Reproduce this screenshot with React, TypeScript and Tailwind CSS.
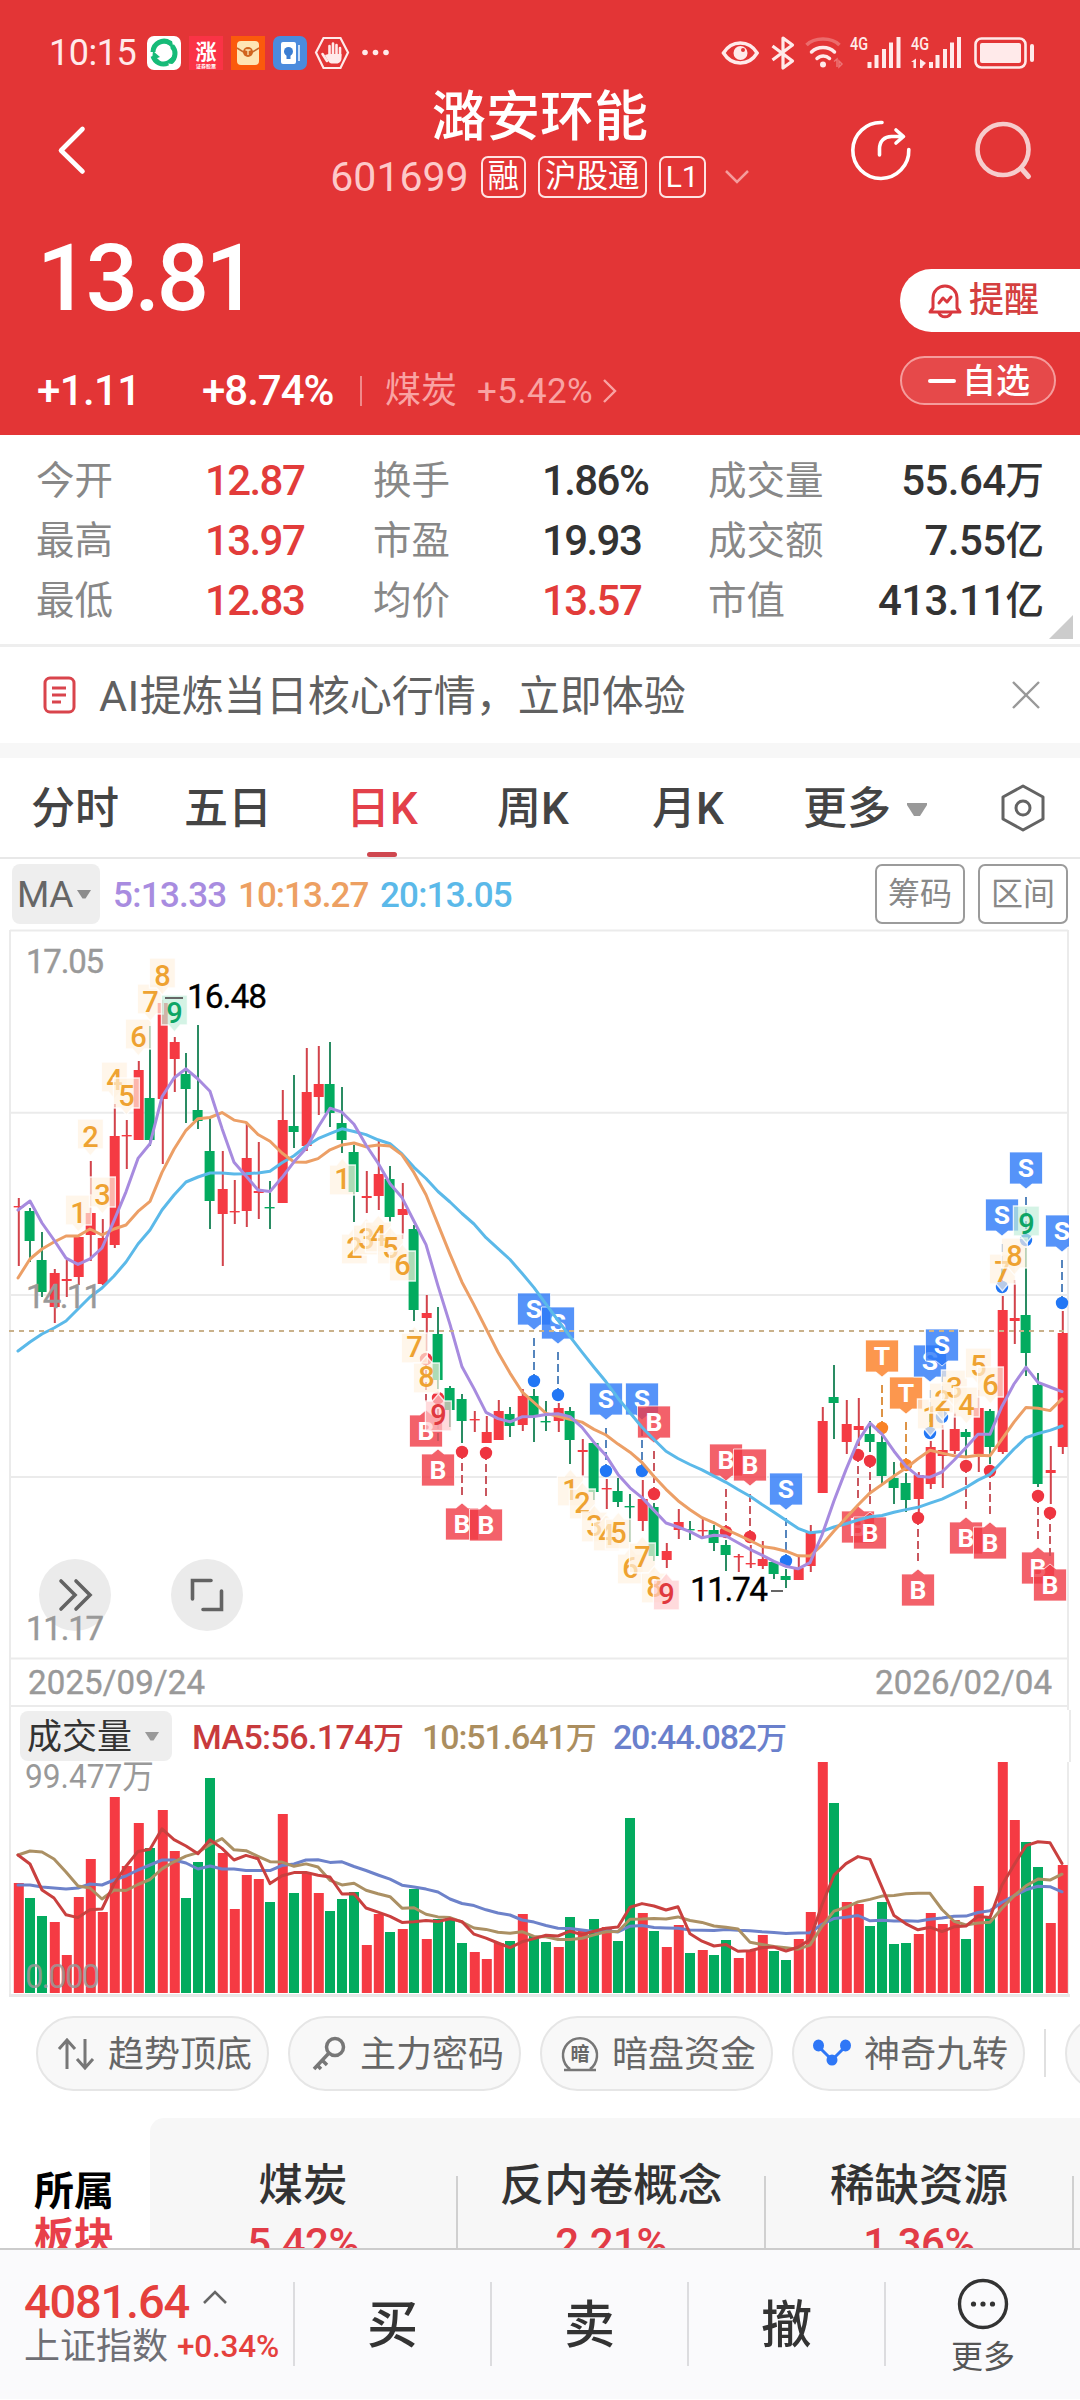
import type { ReactNode } from "react";

type Candle = [high: number, low: number, top: number, bottom: number, up: 0 | 1];

/* ---- daily candles, y positions on the 1058px wide chart canvas ---- */
const CANDLES: Candle[] = [
  [1198, 1266, 1206, 1207, 1], [1208, 1262, 1211, 1241, 0], [1232, 1297, 1260, 1292, 0], [1269, 1323, 1273, 1307, 1],
  [1260, 1297, 1279, 1281, 1], [1237, 1285, 1237, 1277, 1], [1161, 1261, 1213, 1235, 1], [1219, 1285, 1238, 1284, 1],
  [1104, 1248, 1136, 1245, 1], [1120, 1169, 1135, 1136, 1], [1061, 1140, 1070, 1140, 1], [1026, 1146, 1098, 1140, 0],
  [1000, 1164, 1003, 1099, 1], [1037, 1092, 1042, 1059, 1], [1053, 1123, 1074, 1089, 0], [1025, 1129, 1110, 1121, 0],
  [1119, 1229, 1151, 1201, 0], [1151, 1266, 1189, 1214, 1], [1180, 1224, 1211, 1212, 1], [1122, 1227, 1158, 1211, 1],
  [1142, 1219, 1191, 1193, 1], [1181, 1229, 1207, 1208, 0], [1090, 1203, 1120, 1203, 1], [1075, 1148, 1126, 1132, 0],
  [1048, 1151, 1092, 1146, 1], [1046, 1115, 1084, 1097, 1], [1042, 1127, 1084, 1113, 0], [1087, 1153, 1123, 1140, 0],
  [1145, 1222, 1152, 1192, 0], [1171, 1213, 1196, 1198, 1], [1141, 1210, 1174, 1196, 1], [1166, 1222, 1179, 1217, 0],
  [1183, 1239, 1209, 1215, 1], [1225, 1321, 1229, 1310, 0], [1295, 1351, 1313, 1318, 1], [1307, 1389, 1334, 1380, 0],
  [1386, 1427, 1388, 1410, 0], [1394, 1443, 1399, 1421, 0], [1411, 1432, 1419, 1420, 1], [1416, 1443, 1432, 1443, 1],
  [1400, 1440, 1411, 1440, 1], [1407, 1437, 1414, 1426, 0], [1389, 1431, 1396, 1425, 1], [1389, 1442, 1396, 1417, 0],
  [1401, 1431, 1421, 1422, 0], [1403, 1432, 1408, 1421, 1], [1407, 1464, 1411, 1440, 0], [1439, 1477, 1450, 1452, 1],
  [1443, 1500, 1443, 1492, 0], [1479, 1509, 1488, 1489, 1], [1478, 1507, 1491, 1502, 0], [1494, 1542, 1506, 1507, 0],
  [1480, 1531, 1499, 1521, 1], [1503, 1561, 1507, 1556, 0], [1543, 1568, 1551, 1560, 1], [1509, 1539, 1522, 1530, 1],
  [1521, 1540, 1529, 1530, 0], [1519, 1537, 1530, 1531, 1], [1525, 1551, 1530, 1543, 0], [1540, 1571, 1545, 1555, 0],
  [1554, 1572, 1556, 1557, 1], [1545, 1568, 1563, 1564, 1], [1541, 1569, 1559, 1566, 1], [1562, 1579, 1562, 1574, 0],
  [1569, 1588, 1576, 1580, 0], [1557, 1580, 1568, 1580, 1], [1525, 1572, 1532, 1566, 1], [1407, 1493, 1421, 1493, 1],
  [1365, 1439, 1397, 1403, 0], [1400, 1454, 1424, 1442, 1], [1398, 1446, 1426, 1430, 1], [1421, 1452, 1434, 1442, 0],
  [1436, 1484, 1442, 1476, 0], [1462, 1504, 1478, 1488, 0], [1473, 1512, 1483, 1500, 0], [1472, 1514, 1475, 1499, 1],
  [1441, 1489, 1447, 1484, 1], [1425, 1488, 1450, 1456, 1], [1412, 1454, 1429, 1451, 1], [1429, 1457, 1432, 1437, 0],
  [1390, 1472, 1408, 1454, 1], [1409, 1464, 1411, 1447, 0], [1296, 1454, 1310, 1452, 1], [1280, 1344, 1318, 1321, 1],
  [1248, 1376, 1315, 1353, 0], [1373, 1487, 1385, 1484, 0], [1446, 1504, 1470, 1473, 1], [1311, 1454, 1333, 1447, 1],
];

const VOLUMES = [
  110, 95, 77, 71, 38, 96, 134, 81, 196, 127, 170, 145, 183, 142, 95, 131, 215, 140, 84, 118, 114, 91, 179, 100, 119,
  100, 82, 94, 101, 48, 79, 61, 64, 104, 54, 74, 75, 50, 41, 34, 50, 52, 79, 57, 51, 46, 76, 62, 74, 66, 52, 175, 80,
  62, 46, 68, 40, 43, 38, 53, 35, 42, 58, 42, 33, 54, 81, 231, 190, 91, 89, 67, 91, 49, 50, 59, 80, 69, 73, 54, 107,
  75, 231, 173, 151, 126, 70, 128,
];

/* averages that depend on days before the visible range */
const MA5_HEAD = [1210, 1201, 1223, 1240];
const MA10_HEAD = [1278, 1259, 1249, 1242, 1236, 1236, 1229, 1235, 1229];
const MA20_HEAD = [
  1351, 1342, 1334, 1328, 1321, 1309, 1297, 1288, 1276, 1262, 1244, 1230, 1210, 1195, 1182, 1177, 1173, 1173, 1174,
];
const VMA5_HEAD = [138, 129, 103, 95];
const VMA10_HEAD = [138, 142, 141, 134, 121, 107, 105, 94, 103];
const VMA20_HEAD = [108, 108, 106, 105, 104, 105, 109, 108, 113, 117, 123, 128, 133, 133, 130, 124, 127, 124, 124];

type Flag = { i: number; y: number; kind: "S" | "B" | "T"; above: boolean };
const FLAGS: Flag[] = [
  { i: 34, y: 1359, kind: "B", above: false },
  { i: 35, y: 1398, kind: "B", above: false },
  { i: 37, y: 1452, kind: "B", above: false },
  { i: 39, y: 1453, kind: "B", above: false },
  { i: 43, y: 1381, kind: "S", above: true },
  { i: 45, y: 1395, kind: "S", above: true },
  { i: 49, y: 1471, kind: "S", above: true },
  { i: 52, y: 1471, kind: "S", above: true },
  { i: 53, y: 1494, kind: "B", above: true },
  { i: 59, y: 1532, kind: "B", above: true },
  { i: 61, y: 1537, kind: "B", above: true },
  { i: 64, y: 1561, kind: "S", above: true },
  { i: 70, y: 1455, kind: "B", above: false },
  { i: 71, y: 1461, kind: "B", above: false },
  { i: 72, y: 1428, kind: "T", above: true },
  { i: 74, y: 1465, kind: "T", above: true },
  { i: 75, y: 1518, kind: "B", above: false },
  { i: 76, y: 1433, kind: "S", above: true },
  { i: 77, y: 1417, kind: "S", above: true },
  { i: 79, y: 1466, kind: "B", above: false },
  { i: 81, y: 1471, kind: "B", above: false },
  { i: 82, y: 1287, kind: "S", above: true },
  { i: 84, y: 1240, kind: "S", above: true },
  { i: 85, y: 1496, kind: "B", above: false },
  { i: 86, y: 1513, kind: "B", above: false },
  { i: 87, y: 1303, kind: "S", above: true },
];
const FLAG_COLORS = {
  S: { box: "#2a78f7", dot: "#2277f5", line: "#5585bd" },
  B: { box: "#f03a45", dot: "#ee3540", line: "#c9575f" },
  T: { box: "#fb7d22", dot: "#f98225", line: "#dd9447" },
};

/* nine-turn counts: first candle of each run, and the side they sit on */
const RUNS = [
  { start: 5, above: true },
  { start: 27, above: false },
  { start: 46, above: false },
  { start: 76, above: true },
];

const UP = "#f53a43";
const DOWN = "#03ab5f";

const px = (i: number) => 18 + i * 12;

function average(values: number[], n: number, head: number[]) {
  return values.map((_, i) =>
    i < n - 1 ? head[i] : values.slice(i - n + 1, i + 1).reduce((a, b) => a + b, 0) / n
  );
}

function Line({ ys, color }: { ys: number[]; color: string }) {
  return (
    <polyline
      points={ys.map((y, i) => `${px(i)},${y.toFixed(1)}`).join(" ")}
      fill="none"
      stroke={color}
      strokeWidth="3"
      strokeLinejoin="round"
      strokeLinecap="round"
    />
  );
}

function FlagMark({ i, y, kind, above }: Flag) {
  const c = FLAG_COLORS[kind];
  const x = px(i);
  const d = above ? 1 : -1;
  // box edge next to the dot, and the far edge
  const near = y - d * 56;
  const far = y - d * 88;
  return (
    <g>
      <line x1={x} x2={x} y1={y - d * 43} y2={y - d * 6} stroke={c.line} strokeWidth="2" strokeDasharray="8 4" />
      <circle cx={x} cy={y} r="6.2" fill={c.dot} />
      <path
        d={`M${x - 16.5} ${far}H${x + 16.5}V${near}H${x + 6}L${x} ${near + d * 5}L${x - 6} ${near}H${x - 16.5}Z`}
        fill={c.box}
        fillOpacity="0.8"
        stroke="#fff"
        strokeOpacity="0.75"
        strokeWidth="1"
      />
      <text
        x={x}
        y={(near + far) / 2 + 9}
        textAnchor="middle"
        className="text-[26.500px] font-bold"
        fill="#fff"
      >
        {kind}
      </text>
    </g>
  );
}

function CountMark({ i, n, above }: { i: number; n: number; above: boolean }) {
  const x = px(i) + 0.4;
  const d = above ? -1 : 1;
  const edge = above ? CANDLES[i][0] : CANDLES[i][1];
  const near = edge + d * 12;
  const far = edge + d * 42;
  const last = n === 9;
  const fill = !last ? "#fff1e0" : above ? "#bfeed8" : "#ffc9cc";
  const ink = !last ? "#eea231" : above ? "#0da565" : "#e0383f";
  return (
    <g>
      <path
        d={`M${x - 13} ${far}H${x + 13}V${near}H${x + 6}L${x} ${near - d * 7}L${x - 6} ${near}H${x - 13}Z`}
        fill={fill}
        fillOpacity="0.68"
        stroke="#fff"
        strokeOpacity="0.8"
        strokeWidth="1.3"
      />
      <text x={x} y={edge + d * 25 + 10.5} textAnchor="middle" className="text-[29px] font-medium" fill={ink}>
        {n}
      </text>
    </g>
  );
}

function PriceChart() {
  const closes = CANDLES.map((c) => (c[4] ? c[2] : c[3]));
  return (
    <svg viewBox="0 928 1080 782" className="block h-[782px] w-[1080px]">
      <g stroke="#ebebeb" strokeWidth="2">
        <path d="M10 930.5H1068M10 1112.7H1068M10 1295H1068M10 1477H1068M10 1658.5H1068M10 1706H1068" />
        <path d="M10 930V1710M1068 930V1710" />
      </g>
      <g fill="#ebebeb">
        <circle cx="75" cy="1595" r="36" />
        <circle cx="207" cy="1595" r="36" />
      </g>
      <g fill="none" stroke="#636363" strokeWidth="3.6" strokeLinecap="round">
        <path d="M61 1581l14 14-14 14M76 1581l14 14-14 14" />
        <path d="M192.500 1599v-18.500h18.500M221.500 1591v18.500h-18.500" />
      </g>

      {CANDLES.map(([high, low, top, bottom, up], i) => {
        const cx = px(i) + (up ? 0.8 : 0);
        return (
          <g key={i}>
            <rect x={cx - 1} y={high} width="2" height={low - high} fill={up ? "#d2434b" : "#2a8c63"} />
            <rect
              x={cx - (up ? 5.1 : 5.4)}
              y={top}
              width="10"
              height={Math.max(1.4, bottom - top)}
              fill={up ? UP : DOWN}
            />
          </g>
        );
      })}

      {FLAGS.map((f) => (
        <FlagMark key={f.i} {...f} />
      ))}
      {RUNS.map((run) =>
        [1, 2, 3, 4, 5, 6, 7, 8, 9].map((n) => (
          <CountMark key={`${run.start}-${n}`} i={run.start + n - 1} n={n} above={run.above} />
        ))
      )}

      <Line ys={average(closes, 20, MA20_HEAD)} color="#5bb9e9" />
      <Line ys={average(closes, 10, MA10_HEAD)} color="#ec9f66" />
      <Line ys={average(closes, 5, MA5_HEAD)} color="#a78bdf" />
      <path d="M9 1331H1068" stroke="#c9b18b" strokeWidth="2" strokeDasharray="5 5" />
      <rect x="1069" y="1150" width="11" height="200" fill="#fff" />

      <path d="M165 998h18M771 1591h12" stroke="#666" strokeWidth="2" />
      <g className="text-[33px]" fill="#999" stroke="#999" strokeWidth="0.4">
        <text x="26" y="973" textLength="78">17.05</text>
        <text x="26" y="1308" textLength="76">14.11</text>
        <text x="26" y="1640" textLength="78">11.17</text>
        <text x="28" y="1694" textLength="177">2025/09/24</text>
        <text x="875" y="1694" textLength="177">2026/02/04</text>
      </g>
      <g className="text-[33.500px]" fill="#000" stroke="#000" strokeWidth="0.3">
        <text x="187" y="1008" textLength="80">16.48</text>
        <text x="690" y="1601" textLength="78">11.74</text>
      </g>
    </svg>
  );
}

function VolumeChart() {
  const line = (n: number, head: number[]) => average(VOLUMES, n, head).map((v) => 1993 - v);
  return (
    <svg viewBox="0 1762 1080 236" className="block h-[236px] w-[1080px]">
      <path d="M10 1762V1996M1068 1762V1996" stroke="#ebebeb" strokeWidth="2" />
      <path d="M9 1995.500H1070" stroke="#e8e8e8" strokeWidth="3" />
      {VOLUMES.map((v, i) => {
        const up = CANDLES[i][4];
        return (
          <rect key={i} x={px(i) - (up ? 4.2 : 5)} y={1993 - v} width="10" height={v} fill={up ? UP : DOWN} />
        );
      })}
      <Line ys={line(20, VMA20_HEAD)} color="#6d82ca" />
      <Line ys={line(10, VMA10_HEAD)} color="#ab9064" />
      <Line ys={line(5, VMA5_HEAD)} color="#c9403f" />
      <g className="text-[33px]" fill="#999">
        <text x="25" y="1788" textLength="129" lengthAdjust="spacingAndGlyphs">99.477万</text>
        <text x="25" y="1988" textLength="75" fillOpacity="0.85">0.000</text>
      </g>
    </svg>
  );
}

/* ---- status bar ---- */
function StatusBar() {
  return (
    <div className="flex h-[84px] items-center pt-[21px] pl-[49px] text-[36px] leading-none text-[#ffeaea]">
      <span className="w-[98px] tracking-[-0.5px]">10:15</span>
      <svg viewBox="147 36 243 34" className="h-[34px] w-[243px]">
        <rect x="147" y="36" width="34" height="34" rx="7" fill="#fff" />
        <g fill="none" stroke="#16bb78" strokeWidth="5">
          <path d="M153 52a11 11 0 0 1 17-9" />
          <path d="M172 46a11 11 0 0 1-1 16" />
          <path d="M168 63a11 11 0 0 1-15-7" />
        </g>
        <path d="M163 40l9 1 2 9zM176 54l-4 10-8-1zM152 60l1-9 7 6z" fill="#16bb78" />
        <rect x="189" y="36" width="34" height="34" fill="#fa3346" />
        <text x="206" y="59" textAnchor="middle" className="text-[21px] font-bold" fill="#fff">涨</text>
        <text x="206" y="68" textAnchor="middle" className="text-[5px] font-bold" fill="#fff">证券股票</text>
        <rect x="231" y="36" width="34" height="34" fill="#fb5a0c" />
        <rect x="237" y="41" width="22" height="24" rx="4" fill="#fee5b4" />
        <path d="M237 48l8 5h6l8-5" fill="none" stroke="#c5692c" strokeWidth="1.500" />
        <circle cx="248" cy="52" r="5" fill="#d1641e" />
        <path d="M245.500 50h5M248 50v5" stroke="#fee5b4" strokeWidth="1.300" />
        <rect x="273" y="36" width="34" height="34" rx="7" fill="#4b8bdd" />
        <rect x="281" y="42" width="15" height="22" rx="2" fill="#fff" />
        <circle cx="288.500" cy="51.500" r="4.500" fill="#3b7dd2" />
        <path d="M286.500 55h4v4h-4z" fill="#3b7dd2" />
        <path d="M299 45v16" stroke="#c9def8" strokeWidth="2" />
        <path d="M323.500 38h17l7.500 14.500-7.500 15.500h-17L316 52.500z" fill="none" stroke="#ffeaea" strokeWidth="2.200" />
        <path
          d="M327 61l-4.500-7M329.500 56V46M333 55V43.500M336.500 55V45M340 56V48"
          stroke="#ffeaea"
          strokeWidth="2.600"
          strokeLinecap="round"
        />
        <path d="M325 55l3.500-1h13v4c0 3-2 5.500-5 5.500h-4c-3 0-4-1.500-7.500-8.500z" fill="#ffeaea" />
        <g fill="#ffeaea">
          <circle cx="365" cy="52.500" r="2.800" />
          <circle cx="375.500" cy="52.500" r="2.800" />
          <circle cx="386" cy="52.500" r="2.800" />
        </g>
      </svg>
      <svg viewBox="720 34 316 38" className="ml-[330px] h-[38px] w-[316px]" fill="none" stroke="#ffeaea">
        <path d="M723.500 53c4-6.500 10-10 16.800-10s12.800 3.500 16.800 10c-4 6.500-10 10-16.800 10s-12.800-3.500-16.800-10z" strokeWidth="3.500" />
        <circle cx="740.500" cy="53" r="7" fill="#ffeaea" stroke="none" />
        <circle cx="743" cy="50" r="2" fill="#e33536" stroke="none" />
        <path d="M772.500 46l20 15-9.500 7V38l9.500 7-20 15" strokeWidth="3.200" strokeLinejoin="round" />
        <path d="M806.500 45c8-8 25-8 33 0" strokeWidth="3.500" strokeOpacity="0.3" />
        <path d="M811.500 52c6-6 17-6 23 0M817 58.500c3.500-3.500 9-3.500 12.500 0" strokeWidth="3.500" strokeLinecap="round" />
        <circle cx="823" cy="64.500" r="3" fill="#ffeaea" stroke="none" />
        <path d="M834 61.500l3-2.500v8M839 67v-6l3 3z" strokeWidth="1.500" strokeOpacity="0.35" />
        <g fill="#ffeaea" stroke="none">
          <text x="850" y="50" className="text-[18px] font-medium" textLength="18" lengthAdjust="spacingAndGlyphs">4G</text>
          <path d="M867.500 62h4v6h-4zM874.500 55h4v13h-4zM882 49h4v19h-4zM889 42.500h4V68h-4zM896.500 37h4v31h-4z" />
          <text x="911" y="50" className="text-[18px] font-medium" textLength="18" lengthAdjust="spacingAndGlyphs">4G</text>
          <path d="M929 62h4v6h-4zM935.500 55h4v13h-4zM943 49h4v19h-4zM950 42.500h4V68h-4zM957 37h4v31h-4z" />
          <path d="M911 62l5-3.500V68h-2.500v-6zM920 59l6 4-3.500 3.500V68H920z" />
          <rect x="980" y="43" width="41" height="20" rx="2" />
          <rect x="1030" y="44" width="4" height="18" rx="2" />
        </g>
        <rect x="975.500" y="38.500" width="50" height="29" rx="6" strokeWidth="2.600" />
      </svg>
    </div>
  );
}

function Tag({ children }: { children: ReactNode }) {
  return (
    <span className="flex h-[42px] items-center rounded-[7px] border-2 border-[#ffe3e3] px-[5px] text-[31.500px] leading-none text-white">
      {children}
    </span>
  );
}

function Header() {
  return (
    <header className="h-[435px] bg-[#e33536] text-white">
      <StatusBar />
      <div className="flex h-[120px] items-start">
        <svg viewBox="0 0 240 120" className="h-[120px] w-[240px]">
          <path d="M82.500 45L61 66.500l21.500 21" fill="none" stroke="#fff" strokeWidth="4.600" strokeLinecap="round" strokeLinejoin="round" />
        </svg>
        <div className="flex flex-1 flex-col items-center">
          <h1 className="mt-[7px] text-[54px] leading-[54px] font-medium">潞安环能</h1>
          <div className="mt-[11px] flex items-center">
            <span className="mr-[12px] text-[41px] leading-none text-[#fdc9c9]">601699</span>
            <Tag>融</Tag>
            <div className="ml-[12px] flex gap-[12px]">
              <Tag>沪股通</Tag>
              <Tag>
                <span className="px-[0px] text-[30px]">L1</span>
              </Tag>
            </div>
            <svg viewBox="0 0 26 16" className="ml-[18px] h-[16px] w-[26px]">
              <path d="M2 2l11 11L24 2" fill="none" stroke="#f59c9c" strokeWidth="2.500" />
            </svg>
          </div>
        </div>
        <svg viewBox="840 84 240 120" className="h-[120px] w-[240px]" fill="none" strokeLinecap="round" strokeLinejoin="round">
          <path d="M882 122.500a28 28 0 1 0 26.800 27" stroke="#fff" strokeWidth="3.600" />
          <path d="M879.500 155v-6c0-8 5-12.500 12-12.500h11M896 130l7.500 6.500-7.500 6.500" stroke="#fff" strokeWidth="3.600" />
          <circle cx="1003" cy="149.500" r="25.500" stroke="#f6cccc" strokeWidth="4.600" />
          <path d="M1021 168l7.500 8.500" stroke="#f6cccc" strokeWidth="5" />
        </svg>
      </div>
      <div className="flex h-[231px] justify-between">
        <div className="pl-[37px]">
          <div className="mt-[29px] h-[92px] text-[92px] leading-[92px] font-medium tracking-[-3.5px]">13.81</div>
          <div className="mt-[45px] flex items-center text-[42px] leading-none font-medium">
            <span className="w-[165px] tracking-[-0.6px]">+1.11</span>
            <span className="w-[158px] tracking-[-1px]">+8.74%</span>
            <span className="h-[30px] w-[2px] bg-[#f08a8a]" />
            <span className="ml-[23px] w-[92px] text-[36px] font-normal text-[#f9a3a3]">煤炭</span>
            <span className="text-[35px] font-normal tracking-[0.4px] text-[#f9a3a3]">+5.42%</span>
            <svg viewBox="0 0 16 26" className="ml-[9px] h-[26px] w-[16px]">
              <path d="M2 2l11 11L2 24" fill="none" stroke="#f9a3a3" strokeWidth="2.400" />
            </svg>
          </div>
        </div>
        <div className="flex w-[180px] flex-col pt-[65px]">
          <button className="flex h-[63px] items-center rounded-l-full bg-white pl-[28px] text-[35px] leading-none font-medium text-[#d43f3f]">
            <svg viewBox="0 0 34 36" className="mr-[7px] h-[36px] w-[34px]" fill="none" stroke="#d9383e" strokeWidth="3" strokeLinejoin="round" strokeLinecap="round">
              <path d="M5 25V15a12 12 0 0 1 24 0v10l3 4H2z" />
              <path d="M11 30c2 5 10 5 12 0M11 20l4-5 4 4 4-5" />
            </svg>
            提醒
          </button>
          <button className="mt-[24px] flex h-[49px] w-[156px] items-center rounded-full border-2 border-[#f59c9c] bg-white/10 pl-[26px] text-[34px] leading-none font-medium">
            <span className="mr-[6px] h-[4px] w-[28px] rounded-full bg-white" />
            自选
          </button>
        </div>
      </div>
    </header>
  );
}

const STATS = [
  ["今开", "12.87", true, "换手", "1.86%", false, "成交量", "55.64", "万"],
  ["最高", "13.97", true, "市盈", "19.93", false, "成交额", "7.55", "亿"],
  ["最低", "12.83", true, "均价", "13.57", true, "市值", "413.11", "亿"],
] as const;

function Stats() {
  return (
    <section className="relative h-[212px] border-b-[3px] border-[#eeeeee] bg-white pt-[16px] pl-[36px] text-[38.5px] leading-none">
      {STATS.map(([l1, v1, red1, l2, v2, red2, l3, v3, unit]) => (
        <div key={l1} className="flex h-[60px] items-center text-[#333]">
          <span className="w-[169px] text-[#888]">{l1}</span>
          <span className={`w-[168px] text-[42px] font-medium tracking-[-1.6px] ${red1 ? "text-[#e23c3a]" : ""}`}>{v1}</span>
          <span className="w-[169px] text-[#888]">{l2}</span>
          <span className={`w-[166px] text-[42px] font-medium tracking-[-1.6px] ${red2 ? "text-[#e23c3a]" : ""}`}>{v2}</span>
          <span className="text-[#888]">{l3}</span>
          <span className="ml-auto text-[42px] font-medium tracking-[-0.6px]">{v3}</span>
          <span className="mr-[36px] font-medium">{unit}</span>
        </div>
      ))}
      <svg viewBox="0 0 24 24" className="absolute right-[7px] bottom-[5px] h-[24px] w-[24px]">
        <path d="M24 0v24H0z" fill="#ccc" />
      </svg>
    </section>
  );
}

function AiBanner() {
  return (
    <section className="flex h-[111px] items-center border-b-[15px] border-[#f7f7f7] bg-white pl-[43px] text-[42px] leading-none text-[#606060]">
      <svg viewBox="0 0 34 38" className="h-[38px] w-[34px]" fill="none" stroke="#d9444c" strokeWidth="3">
        <rect x="2" y="2" width="29" height="34" rx="5" />
        <path d="M9 12h14M9 19h14M9 26h9" />
      </svg>
      <span className="mt-[2px] ml-[22px]">
        <span className="text-[43px] tracking-[0.5px]">AI</span>提炼当日核心行情，立即体验
      </span>
      <svg viewBox="0 0 28 28" className="mr-[40px] ml-auto h-[28px] w-[28px]">
        <path d="M1 1l26 26M27 1L1 27" stroke="#999" strokeWidth="2.400" />
      </svg>
    </section>
  );
}

function Tabs() {
  return (
    <nav className="flex h-[101px] items-center border-b-2 border-[#e8e8e8] bg-white pl-[31px] text-[44px] leading-none font-medium text-[#444]">
      <span className="w-[153px] pt-[2px]">分时</span>
      <span className="w-[162px] pt-[2px]">五日</span>
      <span className="flex h-full w-[151px] flex-col justify-between text-[#e3404a]">
        <span className="pt-[29px]">日K</span>
        <span className="ml-[21px] h-[5px] w-[30px] rounded-sm bg-[#cf474f]" />
      </span>
      <span className="w-[155px] pt-[2px]">周K</span>
      <span className="w-[151px] pt-[2px]">月K</span>
      <span className="pt-[2px]">更多</span>
      <svg viewBox="0 0 22 14" className="mt-[4px] ml-[15px] h-[14px] w-[22px]">
        <path d="M1 0h20v2l-7 11h-6L1 2z" fill="#999" />
      </svg>
      <svg viewBox="0 0 46 48" className="ml-[72px] h-[48px] w-[46px]" fill="none" stroke="#636363" strokeWidth="3">
        <path d="M23 2l20 11v22L23 46 3 35V13z" strokeLinejoin="round" />
        <circle cx="23" cy="24" r="7" />
      </svg>
    </nav>
  );
}

function MaBar() {
  return (
    <div className="flex h-[69px] items-center bg-white pt-[1px] pl-[12px] text-[35px] leading-none">
      <span className="flex h-[60px] w-[88px] items-center rounded-[8px] bg-[#eeeeee] pl-[5px] text-[37px] text-[#666]">
        <span className="tracking-[-0.5px]">MA</span>
        <svg viewBox="0 0 14 9" className="ml-[4px] h-[9px] w-[14px]">
          <path d="M0 0h14L8.500 8.500h-3z" fill="#8c8c8c" />
        </svg>
      </span>
      <span className="ml-[13px] w-[125px] pt-[2px] font-medium tracking-[-0.7px] text-[#a88ce0]">5:13.33</span>
      <span className="w-[142px] pt-[2px] font-medium tracking-[-1px] text-[#eda062]">10:13.27</span>
      <span className="pt-[2px] font-medium tracking-[-0.8px] text-[#5bb9e9]">20:13.05</span>
      <div className="mr-[12px] ml-auto flex gap-[13px] text-[32px] text-[#888]">
        <span className="flex h-[60px] w-[90px] items-center justify-center rounded-[7px] border-2 border-[#9b9b9b]">筹码</span>
        <span className="flex h-[60px] w-[90px] items-center justify-center rounded-[7px] border-2 border-[#9b9b9b]">区间</span>
      </div>
    </div>
  );
}

function VolumeBar() {
  return (
    <div className="mx-[9px] flex h-[52px] items-center border-x-2 border-[#ebebeb] pl-[9px] text-[34px] leading-none">
      <span className="flex h-[50px] w-[152px] items-center rounded-[8px] bg-[#eeeeee] pl-[7px] text-[35px] text-[#333]">
        <span className="pt-[2px]">成交量</span>
        <svg viewBox="0 0 14 9" className="ml-[13px] h-[9px] w-[14px]">
          <path d="M0 0h14L8.500 8.500h-3z" fill="#999" />
        </svg>
      </span>
      <span className="ml-[20px] w-[230px] pt-[2px] font-medium tracking-[-0.6px] text-[#c83a3c]">
        MA5:56.174<span className="text-[31px]">万</span>
      </span>
      <span className="w-[191px] pt-[2px] font-medium tracking-[-1.1px] text-[#ab8e5f]">
        10:51.641<span className="text-[31px]">万</span>
      </span>
      <span className="pt-[2px] font-medium tracking-[-1.2px] text-[#6a80cc]">
        20:44.082<span className="text-[31px]">万</span>
      </span>
    </div>
  );
}

function Chip({ icon, label }: { icon: ReactNode; label: string }) {
  return (
    <span className="flex h-[75px] w-[233px] shrink-0 items-center rounded-full border-2 border-[#e6e6e6] bg-[#f8f8f8] pl-[19px] text-[36px] leading-none text-[#666]">
      <span className="w-[51px]">{icon}</span>
      <span className="pt-[3px]">{label}</span>
    </span>
  );
}

const chipIcon = { viewBox: "0 0 38 38", className: "h-[38px] w-[38px]", fill: "none", stroke: "#777", strokeWidth: 3 };

function Chips() {
  return (
    <div className="flex h-[120px] items-start gap-[19px] overflow-hidden pt-[18px] pl-[36px]">
      <Chip
        label="趋势顶底"
        icon={
          <svg {...chipIcon}>
            <path d="M10 34V5M2 14l8-9 8 9M28 4v29M20 24l8 9 8-9" />
          </svg>
        }
      />
      <Chip
        label="主力密码"
        icon={
          <svg {...chipIcon}>
            <circle cx="26" cy="12" r="8.500" strokeWidth="3.500" />
            <path d="M20 18L5 34M13 25l5 5M8 30l4 4" strokeWidth="3.500" />
          </svg>
        }
      />
      <Chip
        label="暗盘资金"
        icon={
          <svg {...chipIcon}>
            <path d="M9 34a17 17 0 1 1 20 0M3 35h32" strokeWidth="2.500" />
            <text x="19" y="26" textAnchor="middle" fill="#666" stroke="none" className="text-[19px] font-bold">暗</text>
          </svg>
        }
      />
      <Chip
        label="神奇九转"
        icon={
          <svg {...chipIcon} stroke="#2f77f6" fill="#2f77f6">
            <path d="M5 11l14 14 14-14" fill="none" />
            <ellipse cx="5.500" cy="10.500" rx="4" ry="4.500" />
            <ellipse cx="32.500" cy="10.500" rx="4" ry="4.500" />
            <ellipse cx="19" cy="25" rx="4" ry="4" />
          </svg>
        }
      />
      <span className="mt-[13px] h-[48px] w-[2px] shrink-0 bg-[#e0e0e0]" />
      <Chip label="" icon={null} />
    </div>
  );
}

const SECTORS = [
  { name: "煤炭", pct: "5.42%" },
  { name: "反内卷概念", pct: "2.21%" },
  { name: "稀缺资源", pct: "1.36%" },
];

function Sectors() {
  return (
    <section className="flex h-[130px] overflow-hidden bg-white">
      <div className="w-[150px] shrink-0 pt-[51px] pl-[34px] text-[40px] leading-[46px] font-bold">
        <div className="text-black">所属</div>
        <div className="text-[#e8404a]">板块</div>
      </div>
      <div className="flex h-[160px] flex-1 rounded-tl-[14px] bg-[#f7f7f7]">
        {SECTORS.map((s) => (
          <div key={s.name} className="flex w-[308px] shrink-0">
            <div className="flex flex-1 flex-col items-center pt-[43px]">
              <span className="text-[44.500px] leading-[50px] font-medium text-[#333]">{s.name}</span>
              <span className="mt-[8px] text-[42px] leading-[50px] font-medium tracking-[-0.5px] text-[#e23c47]">{s.pct}</span>
            </div>
            <span className="mt-[58px] w-[2px] bg-[#d0d0d0]" />
          </div>
        ))}
      </div>
    </section>
  );
}

function BottomBar() {
  return (
    <footer className="flex h-[151px] border-t-2 border-[#cccccc] bg-[#fafafc] text-[#333]">
      <div className="w-[293px] pt-[28px] pl-[24px]">
        <div className="flex items-center text-[47px] leading-[48px] font-medium text-[#e5403c]">
          <span className="tracking-[-1.2px]">4081.64</span>
          <svg viewBox="0 0 26 16" className="mb-[10px] ml-[13px] h-[16px] w-[26px]">
            <path d="M2 14L13 3l11 11" fill="none" stroke="#666" strokeWidth="2.600" />
          </svg>
        </div>
        <div className="mt-[3px] flex items-center text-[36px] leading-[36px] whitespace-nowrap text-[#6f6f75]">
          上证指数
          <span className="ml-[9px] text-[31.500px] font-medium tracking-[-0.2px] text-[#e5403c]">+0.34%</span>
        </div>
      </div>
      {["买", "卖", "撤"].map((label) => (
        <div key={label} className="flex w-[197px]">
          <span className="mt-[32px] h-[84px] w-[2px] bg-[#dcdcdf]" />
          <span className="flex-1 pt-[51px] text-center text-[51px] leading-[50px] font-medium">{label}</span>
        </div>
      ))}
      <div className="flex flex-1">
        <span className="mt-[32px] h-[84px] w-[2px] bg-[#dcdcdf]" />
        <div className="flex flex-1 flex-col items-center pt-[28px] text-[32px] leading-[36px] text-[#555]">
          <svg viewBox="0 0 52 52" className="h-[52px] w-[52px]" fill="#333">
            <circle cx="26" cy="26" r="23.500" fill="none" stroke="#333" strokeWidth="3.400" />
            <circle cx="16.500" cy="26" r="2.600" />
            <circle cx="26" cy="26" r="2.600" />
            <circle cx="35.500" cy="26" r="2.600" />
          </svg>
          <span className="mt-[9px]">更多</span>
        </div>
      </div>
    </footer>
  );
}

export default function App() {
  return (
    <div className="h-[2400px] w-[1080px] overflow-hidden bg-white font-[Roboto,'Noto_Sans_CJK_SC',sans-serif]">
      <Header />
      <Stats />
      <AiBanner />
      <Tabs />
      <MaBar />
      <PriceChart />
      <VolumeBar />
      <VolumeChart />
      <Chips />
      <Sectors />
      <BottomBar />
    </div>
  );
}
